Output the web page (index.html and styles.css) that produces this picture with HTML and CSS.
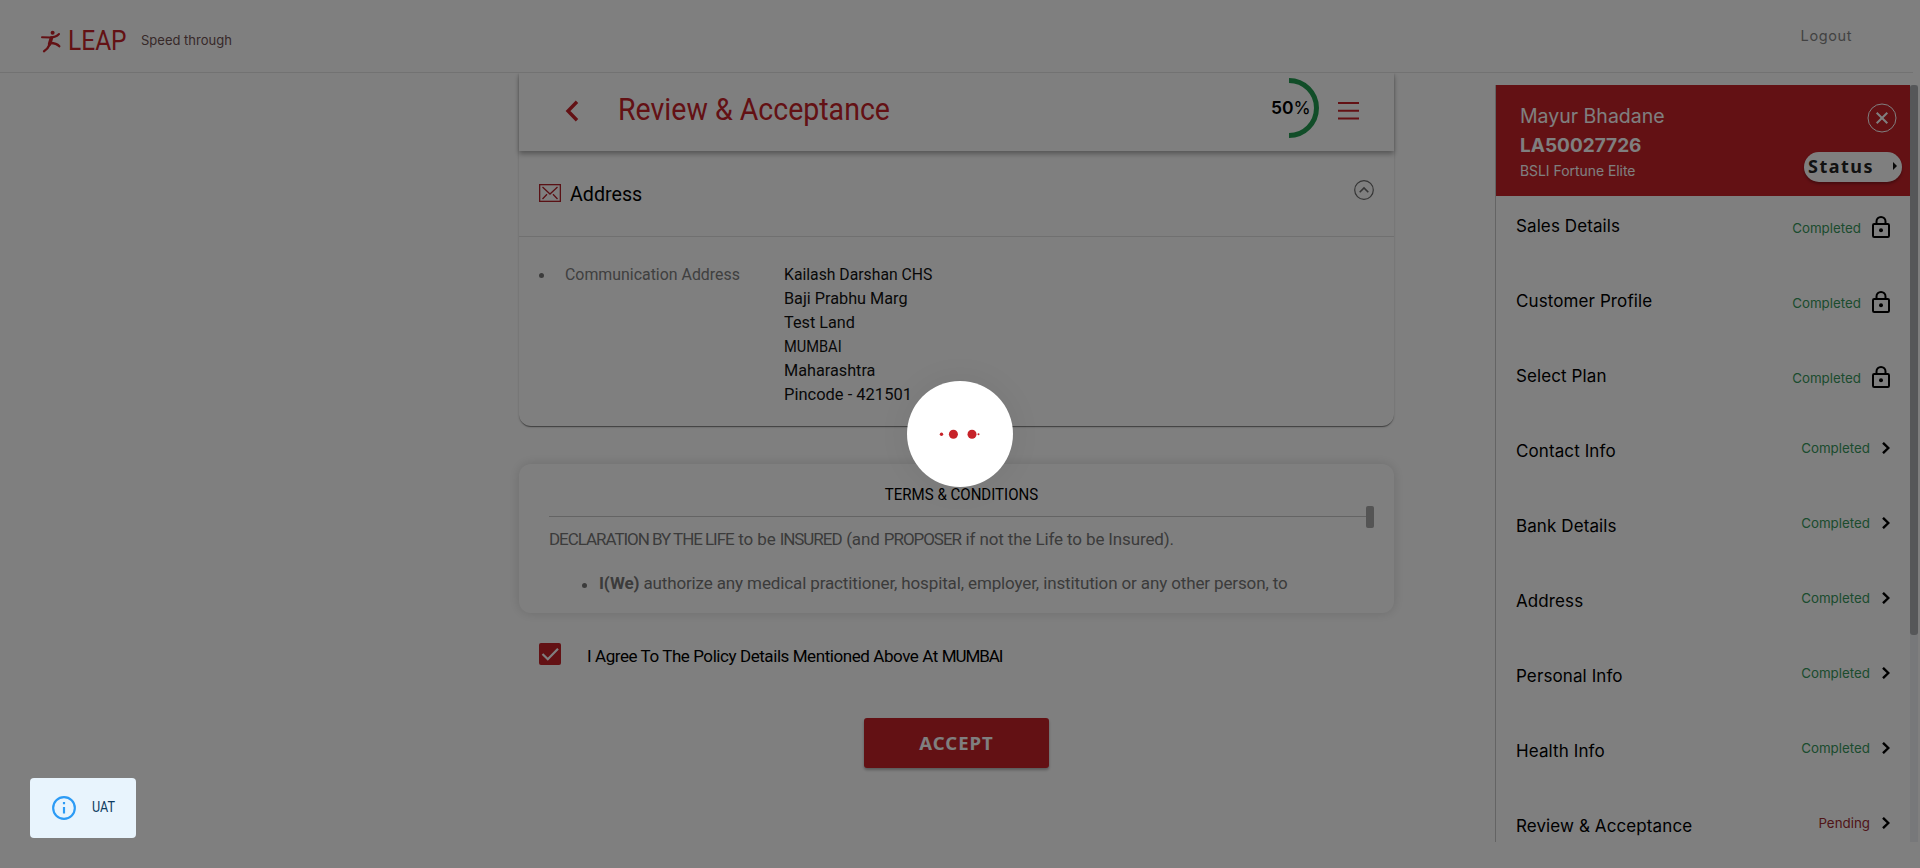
FILE: index.html
```html
<!DOCTYPE html>
<html lang="en">
<head>
<meta charset="utf-8">
<title>LEAP - Review &amp; Acceptance</title>
<link rel="stylesheet" href="styles.css">
</head>
<body>
<div class="page">
  <header class="topbar">
    <svg class="runner" width="20" height="23" viewBox="0 0 20 23" fill="none" stroke="#c72229" stroke-linecap="round" stroke-linejoin="round">
      <circle cx="11.6" cy="2.8" r="2" fill="#c72229" stroke="none"/>
      <path d="M1 7.2L9.5 7.4Q15 7.4 18 4" stroke-width="2"/>
      <path d="M10.4 8L8.6 14" stroke-width="3.6"/>
      <path d="M8.8 14.2Q6.800 19 3 21.200" stroke-width="2.300"/>
      <path d="M9.500 13Q15.500 13 18.300 16.300" stroke-width="2.300"/>
    </svg>
    <span class="brand">LEAP</span>
    <span class="tagline">Speed through</span>
    <span class="logout">Logout</span>
  </header>

  <div class="body">
    <main class="main">
      <section class="review">
        <div class="titlebar">
          <svg class="back" width="14" height="22" viewBox="0 0 14 22" fill="none" stroke="#c72229" stroke-width="3.400"><path d="M12 1.700L3 11L12 20.300"/></svg>
          <h1 class="title">Review &amp; Acceptance</h1>
          <div class="progress">
            <svg width="60" height="60" viewBox="0 0 60 60" fill="none"><path d="M30 2.500A27.500 27.500 0 0 1 30 57.500" stroke="#229b50" stroke-width="5"/></svg>
            <span class="percent"><b>50</b>%</span>
          </div>
          <svg class="burger" width="21" height="18" viewBox="0 0 21 18" stroke="#c72229" stroke-width="2"><path d="M0 1H21M0 8.800H21M0 16.400H21"/></svg>
        </div>
        <div class="section-head">
          <svg width="22" height="18" viewBox="0 0 22 18" fill="none" stroke="#b5222a" stroke-width="1.300"><rect x=".65" y=".65" width="20.700" height="16.700"/><path d="M3.500 3L11 10L18.500 3M3.500 15L8 10.300M18.500 15L14 10.300"/></svg>
          <h2 class="section-title">Address</h2>
          <svg class="collapse" width="20" height="20" viewBox="0 0 20 20" fill="none" stroke="#6b6b6b" stroke-width="1.200"><circle cx="10" cy="10" r="9.300"/><path d="M5.700 12.300L10 8L14.300 12.300" stroke-width="1.600"/></svg>
        </div>
        <div class="address">
          <i class="bullet"></i>
          <span class="address-label">Communication Address</span>
          <div class="address-lines">
            <p class="building">Kailash Darshan CHS</p>
            <p class="street">Baji Prabhu Marg</p>
            <p class="street">Test Land</p>
            <p class="city">MUMBAI</p>
            <p class="street">Maharashtra</p>
            <p class="pincode">Pincode - 421501</p>
          </div>
        </div>
      </section>

      <section class="terms">
        <h3 class="terms-title">TERMS &amp; CONDITIONS</h3>
        <div class="terms-rule"><i class="terms-thumb"></i></div>
        <p class="terms-line"><span class="caps">DECLARATION BY THE LIFE</span> to be <span class="caps">INSURED</span> (and <span class="caps">PROPOSER</span> if not the Life to be Insured).</p>
        <div class="terms-item"><i class="bullet"></i><p class="terms-line"><b>I(We)</b> authorize any medical practitioner, hospital, employer, institution or any other person, to</p></div>
      </section>

      <div class="agree">
        <svg width="22" height="22" viewBox="0 0 22 22" fill="none"><rect width="22" height="22" rx="2" fill="#c72229"/><path d="M3.500 11L8.800 16.300L19 5.800" stroke="#fff" stroke-width="2.200"/></svg>
        <span class="agree-text">I Agree To The Policy Details Mentioned Above At <span class="caps">MUMBAI</span></span>
      </div>
      <button class="accept">ACCEPT</button>
    </main>

    <aside class="side">
      <div class="side-body">
        <div class="profile">
          <div class="profile-text">
            <span class="name">Mayur Bhadane</span>
            <span class="policy">LA50027726</span>
            <span class="plan">BSLI Fortune Elite</span>
          </div>
          <div class="profile-actions">
            <svg class="close" width="30" height="30" viewBox="0 0 30 30" fill="none" stroke="#fff"><circle cx="15" cy="15" r="14"/><path d="M9.700 9.700L20.300 20.300M20.300 9.700L9.700 20.300" stroke-width="2"/></svg>
            <div class="status-pill"><span>Status</span><svg width="4" height="8" viewBox="0 0 4 8"><path d="M0 0L4 4L0 8Z" fill="#111"/></svg></div>
          </div>
        </div>
        <ul class="steps">
          <li class="step locked"><span class="step-name">Sales Details</span><span class="state">Completed</span><svg class="mark" width="18" height="22" viewBox="0 0 18 22" fill="none" stroke="#000" stroke-width="2"><rect x="1" y="8" width="16" height="13" rx="1.200"/><path d="M4.500 8V5.500a4.500 4.500 0 0 1 9 0V8"/><circle cx="9" cy="14.300" r="2" fill="#000" stroke="none"/></svg></li>
          <li class="step locked"><span class="step-name">Customer Profile</span><span class="state">Completed</span><svg class="mark" width="18" height="22" viewBox="0 0 18 22" fill="none" stroke="#000" stroke-width="2"><rect x="1" y="8" width="16" height="13" rx="1.200"/><path d="M4.500 8V5.500a4.500 4.500 0 0 1 9 0V8"/><circle cx="9" cy="14.300" r="2" fill="#000" stroke="none"/></svg></li>
          <li class="step locked"><span class="step-name">Select Plan</span><span class="state">Completed</span><svg class="mark" width="18" height="22" viewBox="0 0 18 22" fill="none" stroke="#000" stroke-width="2"><rect x="1" y="8" width="16" height="13" rx="1.200"/><path d="M4.500 8V5.500a4.500 4.500 0 0 1 9 0V8"/><circle cx="9" cy="14.300" r="2" fill="#000" stroke="none"/></svg></li>
          <li class="step"><span class="step-name">Contact Info</span><span class="state">Completed</span><svg class="mark" width="8" height="12" viewBox="0 0 8 12" fill="none" stroke="#000" stroke-width="2.400"><path d="M1 .8L6.300 6L1 11.200"/></svg></li>
          <li class="step"><span class="step-name">Bank Details</span><span class="state">Completed</span><svg class="mark" width="8" height="12" viewBox="0 0 8 12" fill="none" stroke="#000" stroke-width="2.400"><path d="M1 .8L6.300 6L1 11.200"/></svg></li>
          <li class="step"><span class="step-name">Address</span><span class="state">Completed</span><svg class="mark" width="8" height="12" viewBox="0 0 8 12" fill="none" stroke="#000" stroke-width="2.400"><path d="M1 .8L6.300 6L1 11.200"/></svg></li>
          <li class="step"><span class="step-name">Personal Info</span><span class="state">Completed</span><svg class="mark" width="8" height="12" viewBox="0 0 8 12" fill="none" stroke="#000" stroke-width="2.400"><path d="M1 .8L6.300 6L1 11.200"/></svg></li>
          <li class="step"><span class="step-name">Health Info</span><span class="state">Completed</span><svg class="mark" width="8" height="12" viewBox="0 0 8 12" fill="none" stroke="#000" stroke-width="2.400"><path d="M1 .8L6.300 6L1 11.200"/></svg></li>
          <li class="step"><span class="step-name">Review &amp; Acceptance</span><span class="state pending">Pending</span><svg class="mark" width="8" height="12" viewBox="0 0 8 12" fill="none" stroke="#000" stroke-width="2.400"><path d="M1 .8L6.300 6L1 11.200"/></svg></li>
        </ul>
      </div>
      <div class="scroll-track"><i class="scroll-thumb"></i></div>
    </aside>
  </div>
</div>

<div class="overlay">
  <div class="loader">
    <svg width="106" height="106" viewBox="0 0 106 106" fill="#c72229"><circle cx="34.500" cy="53.300" r="1.700"/><circle cx="46.400" cy="53.300" r="4.500"/><circle cx="65" cy="53.300" r="4.500"/><circle cx="71.500" cy="53.300" r="1"/></svg>
  </div>
</div>

<div class="toast">
  <svg width="26" height="26" viewBox="0 0 24 24" fill="#2c9bf5"><path d="M11 6.500h2v2h-2zM11 11h2v6h-2zM12 1A11 11 0 1 0 12 23 11 11 0 0 0 12 1zm0 20a9 9 0 1 1 0-18 9 9 0 0 1 0 18z"/></svg>
  <span>UAT</span>
</div>
</body>
</html>
```

FILE: styles.css
```css
* { box-sizing: border-box; margin: 0; padding: 0; }
body { height: 868px; overflow: hidden; background: #fff; font-family: Roboto, "Liberation Sans", sans-serif; color: #000; }
.page { height: 868px; display: flex; flex-direction: column; }
svg { display: block; flex: none; }
span, h1, h2, h3, p { white-space: nowrap; }

.topbar { height: 73px; width: 1913px; flex: none; display: flex; align-items: flex-start; border-bottom: 1px solid #e4e4e4; position: relative; z-index: 2; background: #fff; }
.runner { margin: 30px 0 0 41px; }
.brand { margin: 24px 0 0 7px; width: 58px; font-size: 28.500px; line-height: 33px; color: #c72229; transform: scaleX(.86); transform-origin: 0 50%; }
.tagline { margin: 30px 0 0 15px; font-family: Inter, sans-serif; font-size: 13px; line-height: 20px; color: #6e5252; }
.logout { margin: 25px 61px 0 auto; font-family: Inter, sans-serif; font-size: 14.500px; line-height: 22px; letter-spacing: .6px; color: #858585; }

.body { flex: 1; display: flex; }
.main { width: 875px; margin-left: 519px; display: flex; flex-direction: column; }
.review { height: 353px; border-radius: 0 0 12px 12px; box-shadow: 0 2px 1px -1px rgba(0,0,0,.3), 0 1px 1px rgba(0,0,0,.2), 0 1px 3px rgba(0,0,0,.14); }
.titlebar { height: 78px; display: flex; align-items: center; box-shadow: 0 3px 5px rgba(0,0,0,.32); padding-left: 46px; }
.back { margin-top: -3px; }
.title { margin: -4px 0 0 39px; font-weight: 400; font-size: 30.500px; line-height: 40px; color: #c72229; transform: scaleX(.935); transform-origin: 0 50%; }
.progress { width: 60px; height: 60px; margin: -8px 0 0 auto; position: relative; }
.percent { position: absolute; left: 12px; top: 20px; font-family: Inter, sans-serif; font-size: 17.500px; line-height: 20px; }
.percent b { font-weight: 600; }
.burger { margin: -2px 35px 0 19px; }
.section-head { height: 86px; padding: 0 20px; display: flex; align-items: center; border-bottom: 1px solid #e0e0e0; }
.section-head svg { margin-top: -2px; }
.section-title { margin: 1px 0 0 9px; font-weight: 400; font-size: 21px; line-height: 28px; transform: scaleX(.937); transform-origin: 0 50%; }
.section-head .collapse { margin: -8px 0 0 auto; }
.address { display: flex; padding: 25px 20px 0; font-size: 17px; line-height: 24px; }
.bullet { width: 5px; height: 5px; margin: 11px 0 0; border-radius: 50%; background: #777; flex: none; }
.address-label { width: 219px; margin-left: 21px; color: #808080; transform: scaleX(.935); transform-origin: 0 50%; }
.address-lines { color: #111; }
.address-lines p { transform-origin: 0 50%; }
.building { transform: scaleX(.926); }
.street { transform: scaleX(.955); }
.city { transform: scaleX(.86); }
.pincode { transform: scaleX(.97); }

.terms { height: 149px; margin-top: 38px; padding: 19px 20px 0 30px; border-radius: 12px; box-shadow: 0 0 12px rgba(0,0,0,.15); }
.terms-title { text-align: center; font-weight: 400; font-size: 17px; line-height: 22px; transform: scaleX(.885); }
.terms-rule { height: 22px; margin: 1px 0 0; display: flex; align-items: flex-start; }
.terms-rule::before { content: ""; flex: 1; height: 1px; margin-top: 10px; background: #c8c8c8; }
.terms-thumb { width: 8px; height: 22px; border-radius: 2px; background: #a8a8a8; }
.terms-line { font-size: 17px; line-height: 24px; margin-top: -1px; color: #777; letter-spacing: -.13px; }
.caps { letter-spacing: -1.050px; margin-right: .6px; }
.terms-item { display: flex; padding-left: 33px; margin-top: 21px; }
.terms-item p { margin-left: 12px; }

.agree { display: flex; align-items: flex-start; margin: 30px 0 0 20px; }
.agree-text { margin: 1px 0 0 26px; font-size: 17px; line-height: 24px; letter-spacing: -.43px; }
.accept { align-self: flex-start; width: 185px; height: 50px; margin: 50px 0 0 345px; padding: 0; border: 0; border-radius: 3px; background: #c72229; color: #fff; font: 700 18.500px/26px "Noto Sans", sans-serif; letter-spacing: 1px; box-shadow: 0 2px 3px rgba(0,0,0,.3); }

.side { display: flex; width: 423px; height: 757px; margin: 12px 2px 0 auto; overflow: hidden; border-left: 1px solid #c8c8c8; font-family: Inter, sans-serif; }
.side-body { flex: 1; }
.profile { height: 111px; display: flex; justify-content: space-between; background: #c72229; color: #fff; }
.profile-text { display: flex; flex-direction: column; padding: 16px 0 0 24px; }
.name { font-size: 19.500px; line-height: 31px; }
.policy { font-size: 19px; line-height: 28px; font-weight: 700; }
.plan { font-size: 13.900px; line-height: 22px; }
.profile-actions { display: flex; flex-direction: column; align-items: flex-end; padding: 18px 8px 0 0; }
.close { margin-right: 5px; }
.status-pill { display: flex; align-items: center; justify-content: space-between; width: 98px; height: 30px; margin-top: 19px; padding: 0 5px 2px 4px; border-radius: 15px; background: #fff; color: #222; font: 700 18px/26px "Noto Sans", sans-serif; letter-spacing: 1.500px; box-shadow: 0 2px 3px rgba(0,0,0,.3); }
.steps { list-style: none; }
.step { height: 75px; padding: 15px 20px 0 20px; display: flex; align-items: flex-start; }
.step-name { flex: 1; font-size: 17px; line-height: 30px; letter-spacing: .1px; }
.state { font-size: 13.350px; line-height: 20px; margin-top: 2px; color: #38985c; }
.pending { color: #a02a30; }
.mark { margin: 6px 0 0 12px; }
.locked .state { margin-top: 7px; }
.locked .mark { margin: 5px 0 0 11px; }
.scroll-track { width: 8px; background: #eff1f5; }
.scroll-thumb { display: block; height: 550px; border-radius: 3px; background: #acaeb2; }

.overlay { position: fixed; inset: 0; z-index: 10; background: rgba(0,0,0,.5); display: flex; align-items: center; justify-content: center; }
.loader { width: 106px; height: 106px; border-radius: 50%; background: #fff; box-shadow: 0 0 40px rgba(0,0,0,.08); }
.toast { position: fixed; z-index: 11; left: 30px; bottom: 30px; width: 106px; height: 60px; display: flex; align-items: center; padding-left: 21px; border-radius: 4px; background: #e8f4fd; color: #0d3c61; font-size: 15px; line-height: 20px; }
.toast span { margin: -2px 0 0 15px; transform: scaleX(.84); transform-origin: 0 50%; }
```
